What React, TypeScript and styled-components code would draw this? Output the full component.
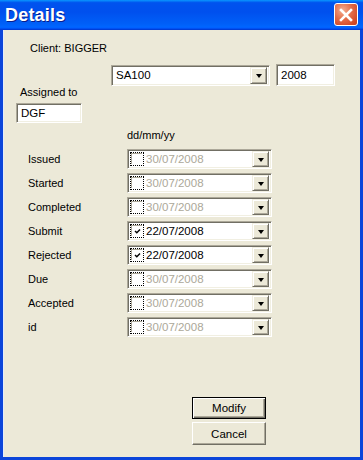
import React from 'react';
import styled, { createGlobalStyle } from 'styled-components';

const Global = createGlobalStyle`
  html, body { margin: 0; padding: 0; background: #ECE9D8; }
  body { font-family: "Liberation Sans", Arial, sans-serif; font-size: 11px; color: #000; }
`;

const Window = styled.div`
  width: 363px;
  height: 460px;
  display: flex;
  flex-direction: column;
  background: #0B45DA;
`;

const TitleBar = styled.div`
  height: 30px;
  flex: none;
  display: flex;
  align-items: center;
  justify-content: space-between;
  padding: 0 5px;
  background: linear-gradient(180deg, #0997ff 0%, #0053ee 9%, #0050ee 40%, #0060f8 80%, #0066ff 90%, #005bff 94%, #003dd7 97%, #003dd7 100%);
`;

const Title = styled.span`
  color: #fff;
  font: bold 18px "Liberation Sans", Arial, sans-serif;
  text-shadow: 1px 1px #0A1E8C;
  letter-spacing: 0.2px;
`;

const CloseButton = styled.div`
  width: 24px;
  height: 23px;
  box-sizing: border-box;
  margin-top: -1px;
  border: 1px solid #fff;
  border-radius: 3px;
  background: radial-gradient(circle at 35% 30%, #F4AE92 0%, #E46C48 45%, #D24A28 80%, #C44020 100%);
  display: flex;
  align-items: center;
  justify-content: center;
`;

const Frame = styled.div`
  flex: 1;
  display: flex;
  padding: 0 3px 3px;
`;

const Body = styled.div`
  flex: 1;
  display: flex;
  flex-direction: column;
  align-items: flex-start;
  background: #ECE9D8;
  box-shadow: inset 1px 0 #E4ECFA;
`;

const Label = styled.div<{ $top: number; $left: number }>`
  line-height: 13px;
  margin: ${(p) => p.$top}px 0 0 ${(p) => p.$left}px;
  white-space: nowrap;
`;

const TopRow = styled.div`
  display: flex;
  align-items: center;
  gap: 6px;
  height: 22px;
  margin: 9px 0 0 108px;
`;

const AssignedRow = styled.div`
  margin: 4px 0 0 13px;
`;

const Sunken = styled.div<{ $w: number; $h: number }>`
  width: ${(p) => p.$w}px;
  height: ${(p) => p.$h}px;
  box-sizing: border-box;
  border: 1px solid;
  border-color: #ACA899 #FFFFFF #FFFFFF #ACA899;
  box-shadow: inset 1px 1px #716F64, inset -1px -1px #F1EFE2;
  background: #fff;
  display: flex;
  align-items: center;
  padding: 2px;
  line-height: 13px;
`;

const EditText = styled.span`
  padding-left: 2px;
  font-size: 11.5px;
  flex: 1;
`;

const DropButton = styled.div<{ $h: number }>`
  width: 17px;
  height: ${(p) => p.$h}px;
  box-sizing: border-box;
  flex: none;
  margin-left: auto;
  background: #ECE9D8;
  border: 1px solid;
  border-color: #F1EFE2 #716F64 #716F64 #F1EFE2;
  box-shadow: inset 1px 1px #fff, inset -1px -1px #ACA899;
  display: flex;
  align-items: center;
  justify-content: center;
`;

const Arrow = styled.div`
  width: 0;
  height: 0;
  border-left: 3.5px solid transparent;
  border-right: 3.5px solid transparent;
  border-top: 4px solid #000;
  margin-top: 1px;
`;

const DateGrid = styled.div`
  display: grid;
  grid-template-columns: 124px 145px;
  grid-auto-rows: 20px;
  row-gap: 4px;
  margin-top: 7px;
`;

const RowLabel = styled.div`
  align-self: center;
  padding-left: 25px;
  padding-top: 1px;
  line-height: 13px;
`;

const FocusRect = styled.div`
  width: 14px;
  height: 14px;
  box-sizing: border-box;
  flex: none;
  border: 1px dotted #000;
`;

const CheckBox = styled.div`
  width: 11px;
  height: 11px;
  box-sizing: border-box;
  border-top: 1px solid #ACA899;
  border-left: 1px solid #ACA899;
  background: #fff;
  display: flex;
  align-items: center;
  justify-content: center;
`;

const DateText = styled.span<{ $enabled: boolean }>`
  margin-left: 2px;
  font-size: 11.5px;
  color: ${(p) => (p.$enabled ? '#000' : '#ACA899')};
`;

const Buttons = styled.div`
  display: flex;
  flex-direction: column;
  gap: 3px;
  margin: auto 0 12px 189px;
`;

const PushButton = styled.div<{ $default?: boolean; $h: number }>`
  width: 74px;
  height: ${(p) => p.$h}px;
  box-sizing: border-box;
  background: #ECE9D8;
  border: 1px solid;
  border-color: ${(p) => (p.$default ? '#000' : '#FFFFFF #716F64 #716F64 #FFFFFF')};
  box-shadow: ${(p) =>
    p.$default
      ? 'inset 1px 1px #fff, inset -1px -1px #716F64, inset -2px -2px #ACA899'
      : 'inset -1px -1px #ACA899'};
  display: flex;
  align-items: center;
  justify-content: center;
  font-size: 11.5px;
`;

const rows = [
  { label: 'Issued', date: '30/07/2008', on: false },
  { label: 'Started', date: '30/07/2008', on: false },
  { label: 'Completed', date: '30/07/2008', on: false },
  { label: 'Submit', date: '22/07/2008', on: true },
  { label: 'Rejected', date: '22/07/2008', on: true },
  { label: 'Due', date: '30/07/2008', on: false },
  { label: 'Accepted', date: '30/07/2008', on: false },
  { label: 'id', date: '30/07/2008', on: false },
];

export default function App() {
  return (
    <>
      <Global />
      <Window>
        <TitleBar>
          <Title>Details</Title>
          <CloseButton>
            <svg width="14" height="14" viewBox="0 0 14 14">
              <path d="M2 2 L12 12 M12 2 L2 12" stroke="#fff" strokeWidth="2.6" strokeLinecap="square" />
            </svg>
          </CloseButton>
        </TitleBar>
        <Frame>
          <Body>
            <Label $top={12} $left={27}>Client: BIGGER</Label>
            <TopRow>
              <Sunken $w={159} $h={21}>
                <EditText>SA100</EditText>
                <DropButton $h={17}>
                  <Arrow />
                </DropButton>
              </Sunken>
              <Sunken $w={59} $h={22}>
                <EditText>2008</EditText>
              </Sunken>
            </TopRow>
            <Label $top={0} $left={17}>Assigned to</Label>
            <AssignedRow>
              <Sunken $w={66} $h={20}>
                <EditText>DGF</EditText>
              </Sunken>
            </AssignedRow>
            <Label $top={6} $left={124}>dd/mm/yy</Label>
            <DateGrid>
              {rows.map((r) => (
                <React.Fragment key={r.label}>
                  <RowLabel>{r.label}</RowLabel>
                  <Sunken $w={145} $h={20}>
                    <FocusRect>
                      <CheckBox>
                        {r.on && (
                          <svg width="7" height="7" viewBox="0 0 7 7">
                            <path d="M1 3 L2.8 4.8 L6 1.5" stroke="#000" strokeWidth="1.4" fill="none" />
                          </svg>
                        )}
                      </CheckBox>
                    </FocusRect>
                    <DateText $enabled={r.on}>{r.date}</DateText>
                    <DropButton $h={16}>
                      <Arrow />
                    </DropButton>
                  </Sunken>
                </React.Fragment>
              ))}
            </DateGrid>
            <Buttons>
              <PushButton $default $h={22}>Modify</PushButton>
              <PushButton $h={23}>Cancel</PushButton>
            </Buttons>
          </Body>
        </Frame>
      </Window>
    </>
  );
}
